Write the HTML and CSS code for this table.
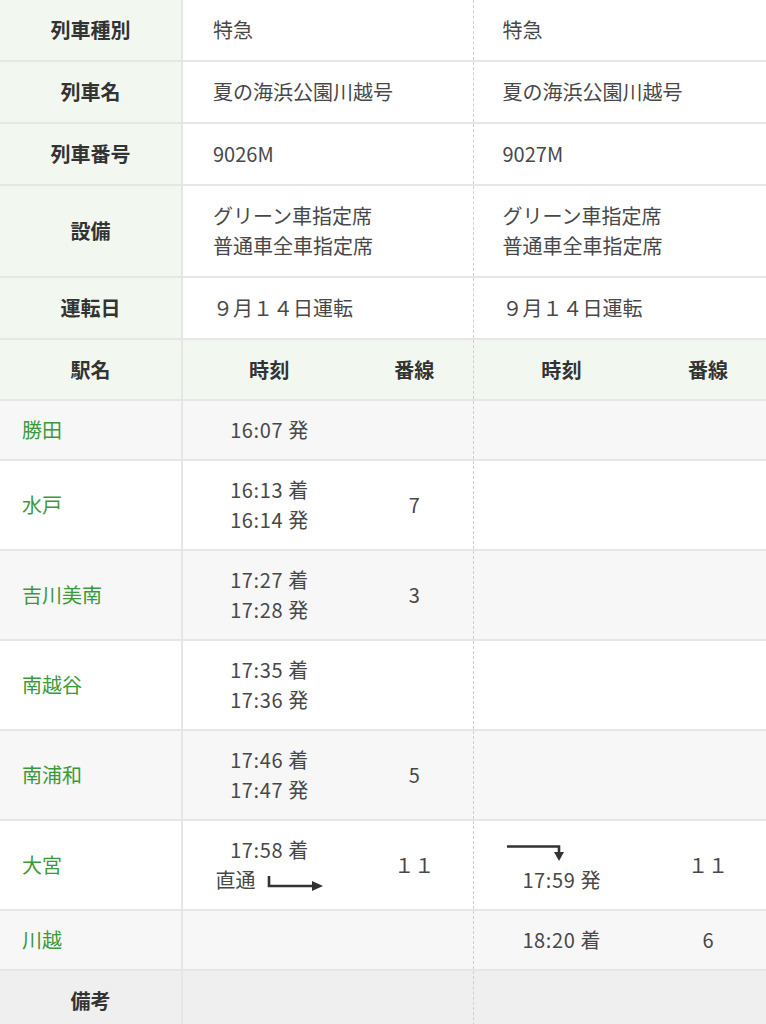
FILE: index.html
```html
<!DOCTYPE html>
<html lang="ja">
<head>
<meta charset="utf-8">
<title>時刻表</title>
<link rel="stylesheet" href="styles.css">
</head>
<body>
<table class="tt">
  <colgroup>
    <col class="c-st"><col class="c-t1"><col class="c-p1"><col class="c-t2"><col class="c-p2">
  </colgroup>
  <tbody>
    <tr class="info">
      <th>列車種別</th>
      <td colspan="2">特急</td>
      <td colspan="2" class="tr2">特急</td>
    </tr>
    <tr class="info">
      <th>列車名</th>
      <td colspan="2">夏の海浜公園川越号</td>
      <td colspan="2" class="tr2">夏の海浜公園川越号</td>
    </tr>
    <tr class="info">
      <th>列車番号</th>
      <td colspan="2">9026M</td>
      <td colspan="2" class="tr2">9027M</td>
    </tr>
    <tr class="info">
      <th>設備</th>
      <td colspan="2">グリーン車指定席<br>普通車全車指定席</td>
      <td colspan="2" class="tr2">グリーン車指定席<br>普通車全車指定席</td>
    </tr>
    <tr class="info">
      <th>運転日</th>
      <td colspan="2">９月１４日運転</td>
      <td colspan="2" class="tr2">９月１４日運転</td>
    </tr>
    <tr class="head">
      <th>駅名</th>
      <th class="time">時刻</th>
      <th class="plat">番線</th>
      <th class="time tr2">時刻</th>
      <th class="plat">番線</th>
    </tr>
    <tr class="st alt">
      <th>勝田</th>
      <td class="time">16:07 発</td><td class="plat"></td>
      <td class="time tr2"></td><td class="plat"></td>
    </tr>
    <tr class="st">
      <th>水戸</th>
      <td class="time">16:13 着<br>16:14 発</td><td class="plat">7</td>
      <td class="time tr2"></td><td class="plat"></td>
    </tr>
    <tr class="st alt">
      <th>吉川美南</th>
      <td class="time">17:27 着<br>17:28 発</td><td class="plat">3</td>
      <td class="time tr2"></td><td class="plat"></td>
    </tr>
    <tr class="st">
      <th>南越谷</th>
      <td class="time">17:35 着<br>17:36 発</td><td class="plat"></td>
      <td class="time tr2"></td><td class="plat"></td>
    </tr>
    <tr class="st alt">
      <th>南浦和</th>
      <td class="time">17:46 着<br>17:47 発</td><td class="plat">5</td>
      <td class="time tr2"></td><td class="plat"></td>
    </tr>
    <tr class="st">
      <th>大宮</th>
      <td class="time">17:58 着<br><span class="thru">直通<svg class="arr-r" width="58" height="18" viewBox="0 0 58 18"><path d="M3 3V13H48" fill="none" stroke="#333" stroke-width="2.6"/><polygon points="46,8 57,13 46,18" fill="#333"/></svg></span></td>
      <td class="plat">１１</td>
      <td class="time tr2"><span class="arr-d-wrap"><svg class="arr-d" width="60" height="18" viewBox="0 0 60 18"><path d="M0 2.5H52V9" fill="none" stroke="#333" stroke-width="2.6"/><polygon points="47,8 57,8 52,17" fill="#333"/></svg></span><br>17:59 発</td>
      <td class="plat">１１</td>
    </tr>
    <tr class="st alt">
      <th>川越</th>
      <td class="time"></td><td class="plat"></td>
      <td class="time tr2">18:20 着</td><td class="plat">6</td>
    </tr>
    <tr class="note">
      <th>備考</th>
      <td colspan="2"></td>
      <td colspan="2" class="tr2"></td>
    </tr>
  </tbody>
</table>
</body>
</html>
```

FILE: styles.css
```css
html, body {
  margin: 0;
  padding: 0;
  background: #ffffff;
}

body {
  font-family: "Noto Sans CJK JP", "Noto Sans", sans-serif;
  font-size: 20px;
  color: #484848;
}

.tt {
  width: 766px;
  table-layout: fixed;
  border-collapse: collapse;
  border-spacing: 0;
}

.c-st { width: 182px; }
.c-t1 { width: 174px; }
.c-p1 { width: 117px; }
.c-t2 { width: 177px; }
.c-p2 { width: 116px; }

.tt th,
.tt td {
  padding: 15px 0 15px;
  line-height: 30px;
  font-weight: normal;
  vertical-align: middle;
  border-bottom: 2px solid #e6e6e6;
}

.tt tr > :first-child {
  border-right: 2px solid #e6e6e6;
}

.tt .tr2 {
  border-left: 1px dashed #cfcfcf;
}

/* info rows */
.info th {
  background: #f2f8ef;
  font-weight: bold;
  color: #333333;
  text-align: center;
}

.info td {
  background: #ffffff;
  text-align: left;
  padding-left: 30px;
}

.info td.tr2 {
  padding-left: 29px;
}

/* header row */
.head th {
  background: #f2f8ef;
  font-weight: bold;
  color: #333333;
  text-align: center;
  padding: 15px 0 14px;
}

/* station rows */
.st th,
.st td {
  padding-top: 14px;
  padding-bottom: 14px;
}

.st th {
  text-align: left;
  padding-left: 22px;
  color: #3a9a3a;
}

.st td {
  text-align: center;
}

.st.alt th,
.st.alt td {
  background: #f7f7f7;
}

.time {
  text-align: center;
  letter-spacing: 0.6px;
}

.plat {
  text-align: center;
}

.thru {
  display: inline-flex;
  align-items: center;
  gap: 10px;
  margin-left: 0;
  letter-spacing: 0;
}

.arr-r {
  display: block;
  margin-top: 4px;
}

.arr-d-wrap {
  display: inline-block;
  margin-right: 50px;
  vertical-align: middle;
}

.arr-d {
  display: block;
}

/* note row */
.note th,
.note td {
  background: #efefef;
  border-bottom: none;
}

.note th {
  font-weight: bold;
  color: #333333;
  text-align: center;
  padding-bottom: 30px;
}
```
